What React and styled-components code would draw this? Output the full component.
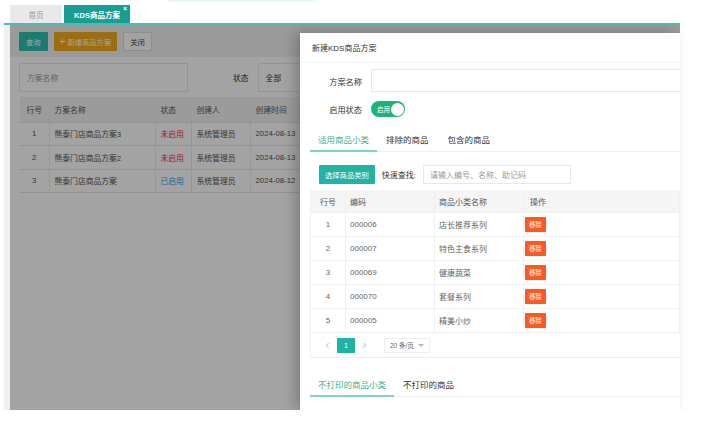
import React from 'react';
import styled, { createGlobalStyle } from 'styled-components';

const GlobalStyle = createGlobalStyle`
  html, body { margin: 0; padding: 0; background: #fff; }
  body {
    font-family: "Liberation Sans", "Noto Sans CJK SC", sans-serif;
    color: #333;
  }
  * { box-sizing: border-box; }
`;

const Page = styled.div`
  width: 680px;
  padding-left: 4px;
`;

const TopStrip = styled.div`
  height: 5px;
  padding-left: 164px;
`;

const Glow = styled.div`
  width: 147px;
  height: 2px;
  background: #e4fafa;
`;

const TabBar = styled.div`
  display: flex;
  gap: 2px;
  height: 20px;
  padding-left: 6px;
  border-bottom: 2px solid #52b9b1;
`;

const PageTab = styled.div`
  position: relative;
  width: ${(p) => p.$w}px;
  display: flex;
  align-items: center;
  justify-content: center;
  font-size: 7.5px;
  font-weight: ${(p) => (p.$active ? 700 : 400)};
  color: ${(p) => (p.$active ? '#fff' : '#999')};
  background: ${(p) => (p.$active ? '#199d92' : '#e9e9e9')};
`;

const Close = styled.span`
  position: absolute;
  top: 0;
  right: 3px;
  font-size: 7px;
  font-weight: 700;
  color: #fff;
`;

const Body = styled.div`
  position: relative;
  height: 385px;
  display: flex;
`;

const SideStrip = styled.div`
  width: 6px;
  background: #f0f0f0;
`;

const Content = styled.div`
  flex: 1;
  background: #fff;
  display: flex;
  flex-direction: column;
`;

const Toolbar = styled.div`
  display: flex;
  gap: 6px;
  padding: 7px 9px 6px;
  background: #f1f1f1;
`;

const Btn = styled.div`
  height: 19px;
  padding: 0 ${(p) => p.$px || 7}px;
  display: flex;
  align-items: center;
  font-size: 7.3px;
  color: ${(p) => (p.$kind === 'plain' ? '#444' : '#fff')};
  background: ${(p) =>
    p.$kind === 'warn' ? '#f6ad1c' : p.$kind === 'plain' ? '#fff' : p.$kind === 'teal' ? '#21b3a3' : '#2cc2b4'};
  border: 1px solid ${(p) => (p.$kind === 'plain' ? '#ddd' : 'transparent')};
  border-radius: 1px;
`;

const Plus = styled.span`
  font-size: 10px;
  margin-right: 2px;
  line-height: 1;
`;

const FilterBar = styled.div`
  display: flex;
  align-items: center;
  padding: 6px 9px 5px;
`;

const Field = styled.div`
  width: ${(p) => p.$w}px;
  height: 29px;
  display: flex;
  align-items: center;
  padding-left: 7px;
  font-size: 7.8px;
  color: ${(p) => p.$color || '#999'};
  border: 1px solid #e8e8e8;
`;

const FilterLabel = styled.span`
  font-size: 7.8px;
  color: #333;
  margin: 0 9px 0 45px;
`;

const ListTable = styled.table`
  margin-left: 10px;
  border-collapse: collapse;
  table-layout: fixed;
  width: 320px;
  font-size: 7.8px;
  th, td {
    border-bottom: 1px solid #e6e6e6;
    border-right: 1px solid #eee;
    padding: 0 5px;
    text-align: left;
    white-space: nowrap;
    overflow: hidden;
  }
  th {
    height: 25px;
    background: #f2f2f2;
    font-weight: 400;
    color: #555;
  }
  td {
    height: 23.5px;
    color: #555;
  }
  td:first-child, th:first-child { text-align: center; }
`;

const Status = styled.span`
  color: ${(p) => (p.$on ? '#2d9fe8' : '#f0303a')};
`;

const Mask = styled.div`
  position: absolute;
  top: 0;
  left: 6px;
  right: 0;
  bottom: 0;
  background: rgba(0, 0, 0, 0.36);
`;

const Drawer = styled.div`
  position: absolute;
  top: 8px;
  right: 0;
  bottom: 0;
  width: 380px;
  background: #fff;
  box-shadow: -5px 0 12px rgba(0, 0, 0, 0.22);
  display: flex;
  flex-direction: column;
  overflow: hidden;
`;

const DrawerHeader = styled.div`
  height: 30px;
  flex: none;
  display: flex;
  align-items: center;
  padding-left: 12px;
  font-size: 8px;
  color: #333;
  border-bottom: 1px solid #f2f2f2;
`;

const DrawerBody = styled.div`
  padding-left: 10px;
  display: flex;
  flex-direction: column;
`;

const FormRow = styled.div`
  display: flex;
  align-items: center;
  gap: 9px;
  height: ${(p) => p.$h}px;
  margin-top: ${(p) => p.$mt}px;
`;

const FormLabel = styled.label`
  width: 52px;
  text-align: right;
  font-size: 8.2px;
  color: #333;
`;

const TextInput = styled.div`
  flex: 1;
  height: 100%;
  border: 1px solid #e8e8e8;
  border-right: none;
`;

const Switch = styled.div`
  width: 34px;
  height: 16px;
  border-radius: 8px;
  background: #1fb37a;
  display: flex;
  align-items: center;
  justify-content: space-between;
  padding: 0 1.5px 0 6px;
  font-size: 6.5px;
  color: #fff;
`;

const Knob = styled.span`
  width: 13px;
  height: 13px;
  border-radius: 50%;
  background: #fff;
`;

const Tabs = styled.div`
  display: flex;
  height: 25px;
  margin-top: ${(p) => p.$mt}px;
  border-bottom: 1px solid #f0f0f0;
`;

const Tab = styled.div`
  padding: 0 ${(p) => p.$px || 9}px;
  display: flex;
  align-items: center;
  font-size: 8.5px;
  color: ${(p) => (p.$active ? '#45b37f' : '#333')};
  border-bottom: 2px solid ${(p) => (p.$active ? '#7fd3c4' : 'transparent')};
  margin-bottom: -1px;
`;

const ToolRow = styled.div`
  display: flex;
  align-items: center;
  margin-top: 13px;
  padding-left: 9px;
  height: 19px;
`;

const FindLabel = styled.span`
  font-size: 8px;
  color: #333;
  margin: 0 7px 0 7px;
`;

const SearchInput = styled.div`
  width: 148px;
  height: 19px;
  display: flex;
  align-items: center;
  padding-left: 6px;
  font-size: 8px;
  color: #999;
  border: 1px solid #e8e8e8;
`;

const Grid = styled.div`
  margin-top: 6px;
  border-left: 1px solid #f0f0f0;
  border-bottom: 1px solid #eee;
`;

const GridRow = styled.div`
  display: grid;
  grid-template-columns: 35px 89px 89px 1fr;
  height: ${(p) => p.$h}px;
  background: ${(p) => (p.$head ? '#f5f5f5' : '#fff')};
  border-bottom: 1px solid #f0f0f0;
`;

const Cell = styled.div`
  display: flex;
  align-items: center;
  justify-content: ${(p) => (p.$center ? 'center' : 'flex-start')};
  padding-left: ${(p) => (p.$center ? 0 : p.$pl ?? 4)}px;
  font-size: 8px;
  color: ${(p) => (p.$head ? '#555' : '#666')};
  border-right: 1px solid #f0f0f0;
  white-space: nowrap;
`;

const RemoveBtn = styled.span`
  width: 21px;
  height: 15px;
  display: flex;
  align-items: center;
  justify-content: center;
  background: #ff5722;
  color: #fff;
  font-size: 6.3px;
  border-radius: 1px;
`;

const Pager = styled.div`
  height: 24px;
  display: flex;
  align-items: center;
  padding-left: 7px;
  font-size: 7px;
`;

const Arrow = styled.span`
  color: #c8c8c8;
  font-size: 12px;
  line-height: 1;
  width: 19px;
  text-align: center;
`;

const PageNum = styled.span`
  width: 18px;
  height: 15px;
  display: flex;
  align-items: center;
  justify-content: center;
  background: #1eb4a4;
  color: #fff;
`;

const SizeSelect = styled.span`
  margin-left: 10px;
  height: 15px;
  width: 46px;
  display: flex;
  align-items: center;
  padding-left: 5px;
  gap: 4px;
  border: 1px solid #eee;
  color: #666;
  font-size: 6.5px;
`;

const Caret = styled.span`
  width: 0;
  height: 0;
  border-left: 3px solid transparent;
  border-right: 3px solid transparent;
  border-top: 3.5px solid #bbb;
`;

const plans = [
  { name: '熊泰门店商品方案3', on: false, date: '2024-08-13' },
  { name: '熊泰门店商品方案2', on: false, date: '2024-08-13' },
  { name: '熊泰门店商品方案', on: true, date: '2024-08-12' },
];

const cats = [
  ['000006', '店长推荐系列'],
  ['000007', '特色主食系列'],
  ['000069', '健康蔬菜'],
  ['000070', '套餐系列'],
  ['000005', '精美小炒'],
];

export default function App() {
  return (
    <Page>
      <GlobalStyle />
      <TopStrip>
        <Glow />
      </TopStrip>
      <TabBar>
        <PageTab $w={52}>首页</PageTab>
        <PageTab $w={66} $active>
          KDS商品方案
          <Close>×</Close>
        </PageTab>
      </TabBar>
      <Body>
        <SideStrip />
        <Content>
          <Toolbar>
            <Btn $px={6}>查询</Btn>
            <Btn $kind="warn" $px={5}>
              <Plus>+</Plus>新增商品方案
            </Btn>
            <Btn $kind="plain" $px={6}>关闭</Btn>
          </Toolbar>
          <FilterBar>
            <Field $w={169}>方案名称</Field>
            <FilterLabel>状态</FilterLabel>
            <Field $w={60} $color="#333">全部</Field>
          </FilterBar>
          <ListTable>
            <colgroup>
              <col style={{ width: 29 }} />
              <col style={{ width: 106 }} />
              <col style={{ width: 36 }} />
              <col style={{ width: 59 }} />
              <col style={{ width: 90 }} />
            </colgroup>
            <thead>
              <tr>
                <th>行号</th>
                <th>方案名称</th>
                <th>状态</th>
                <th>创建人</th>
                <th>创建时间</th>
              </tr>
            </thead>
            <tbody>
              {plans.map((p, i) => (
                <tr key={p.name}>
                  <td>{i + 1}</td>
                  <td>{p.name}</td>
                  <td>
                    <Status $on={p.on}>{p.on ? '已启用' : '未启用'}</Status>
                  </td>
                  <td>系统管理员</td>
                  <td>{p.date}</td>
                </tr>
              ))}
            </tbody>
          </ListTable>
        </Content>
        <Mask />
        <Drawer>
          <DrawerHeader>新建KDS商品方案</DrawerHeader>
          <DrawerBody>
            <FormRow $h={23} $mt={6}>
              <FormLabel>方案名称</FormLabel>
              <TextInput />
            </FormRow>
            <FormRow $h={24} $mt={5}>
              <FormLabel>启用状态</FormLabel>
              <Switch>
                启用
                <Knob />
              </Switch>
            </FormRow>
            <Tabs $mt={6}>
              <Tab $active $px={8}>适用商品小类</Tab>
              <Tab>排除的商品</Tab>
              <Tab $px={10}>包含的商品</Tab>
            </Tabs>
            <ToolRow>
              <Btn $kind="teal" $px={5}>选择商品类别</Btn>
              <FindLabel>快速查找:</FindLabel>
              <SearchInput>请输入编号、名称、助记码</SearchInput>
            </ToolRow>
            <Grid>
              <GridRow $head $h={23}>
                <Cell $head $center>行号</Cell>
                <Cell $head>编码</Cell>
                <Cell $head>商品小类名称</Cell>
                <Cell $head $pl={6}>操作</Cell>
              </GridRow>
              {cats.map(([code, name], i) => (
                <GridRow key={code} $h={24}>
                  <Cell $center>{i + 1}</Cell>
                  <Cell>{code}</Cell>
                  <Cell>{name}</Cell>
                  <Cell $pl={1}>
                    <RemoveBtn>移除</RemoveBtn>
                  </Cell>
                </GridRow>
              ))}
              <Pager>
                <Arrow>‹</Arrow>
                <PageNum>1</PageNum>
                <Arrow>›</Arrow>
                <SizeSelect>
                  20 条/页
                  <Caret />
                </SizeSelect>
              </Pager>
            </Grid>
            <Tabs $mt={14}>
              <Tab $active $px={8}>不打印的商品小类</Tab>
              <Tab>不打印的商品</Tab>
            </Tabs>
          </DrawerBody>
        </Drawer>
      </Body>
    </Page>
  );
}
